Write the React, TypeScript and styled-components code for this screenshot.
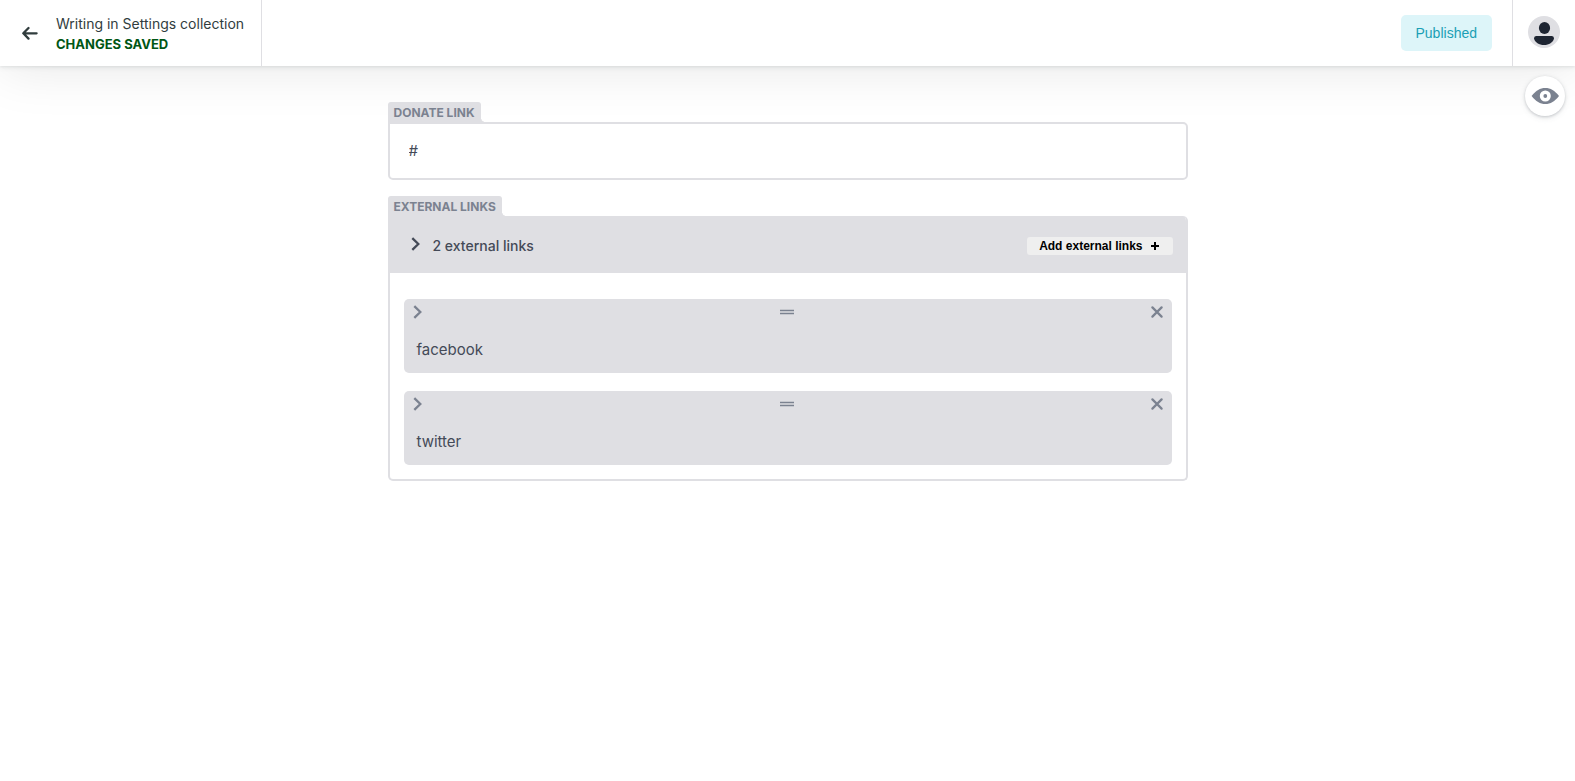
import React, { useState } from 'react';
import styled, { createGlobalStyle } from 'styled-components';

const colors = {
  line: '#dfdfe3',
  label: '#7b8290',
  text: '#444a57',
  dark: '#313d3e',
  saved: '#005614',
};

const GlobalStyle = createGlobalStyle`
  *, *::before, *::after { box-sizing: border-box; }
  body {
    margin: 0;
    background: #fff;
    color: ${colors.text};
    font-family: Inter, 'Liberation Sans', sans-serif;
    font-size: 14px;
  }
  button { font-family: inherit; border: 0; padding: 0; background: none; cursor: pointer; }
  h1, p, ul { margin: 0; padding: 0; }
`;

const Toolbar = styled.header`
  display: flex;
  height: 66px;
  background: #fff;
  box-shadow: 0 2px 6px 0 rgba(68, 74, 87, 0.05), 0 1px 3px 0 rgba(68, 74, 87, 0.1),
    0 2px 54px rgba(0, 0, 0, 0.1);
`;

const BackLink = styled.a`
  display: flex;
  align-items: center;
  gap: 18px;
  padding: 0 17px 0 22px;
  border-right: 1px solid ${colors.line};
  color: ${colors.dark};
  text-decoration: none;
`;

const Status = styled.div`
  padding-top: 2px;
`;

const CollectionName = styled.p`
  font-size: 14px;
  line-height: 20px;
`;

const SaveState = styled.p`
  color: ${colors.saved};
  font-size: 13px;
  font-weight: 700;
  line-height: 20px;
`;

const Actions = styled.div`
  display: flex;
  flex: 1;
  align-items: center;
  justify-content: flex-end;
  padding-right: 20px;
`;

const StatusButton = styled.button`
  height: 36px;
  padding: 0 15px;
  border-radius: 5px;
  background: #ddf5f9;
  color: #1b9fb5;
  font-family: 'Liberation Sans', sans-serif;
  font-size: 14px;
`;

const Account = styled.div`
  display: flex;
  padding: 16px 15px 0;
  border-left: 1px solid ${colors.line};
`;

const AvatarButton = styled.button`
  display: flex;
  width: 32px;
  height: 32px;
`;

const PreviewToggle = styled.button`
  position: absolute;
  top: 76px;
  right: 10px;
  display: flex;
  align-items: center;
  justify-content: center;
  width: 40px;
  height: 40px;
  border-radius: 50%;
  background: #fff;
  color: ${colors.label};
  box-shadow: 0 2px 6px 0 rgba(68, 74, 87, 0.1), 0 1px 3px 0 rgba(68, 74, 87, 0.25);
`;

const Editor = styled.main`
  position: relative;
  max-width: 800px;
  margin: 0 auto;
  padding: 36px 0;
`;

const Field = styled.section`
  & + & { margin-top: 16px; }
`;

const FieldLabel = styled.label`
  position: relative;
  display: block;
  width: fit-content;
  height: 20px;
  padding: 1px 6px 0;
  border-radius: 3px 3px 0 0;
  background: ${colors.line};
  color: ${colors.label};
  font-size: 12px;
  font-weight: 700;
  line-height: 20px;
  text-transform: uppercase;

  &::after {
    content: '';
    position: absolute;
    right: -3px;
    bottom: 0;
    width: 3px;
    height: 3px;
    background: radial-gradient(circle at 100% 0, transparent 2px, ${colors.line} 3px);
  }
`;

const TextInput = styled.input`
  display: block;
  width: 100%;
  height: 58px;
  padding: 0 19px 2px;
  border: 2px solid ${colors.line};
  border-radius: 0 5px 5px 5px;
  outline: 0;
  background: #fff;
  color: ${colors.text};
  font-family: inherit;
  font-size: 15px;
`;

const ListPanel = styled.div`
  border: 2px solid ${colors.line};
  border-top: 0;
  border-radius: 0 5px 5px 5px;
  overflow: hidden;
`;

const ListHeader = styled.div`
  display: flex;
  align-items: center;
  justify-content: space-between;
  height: 57px;
  padding: 2px 13px 0 21px;
  background: ${colors.line};
`;

const ListToggle = styled.button`
  display: flex;
  align-items: center;
  gap: 12px;
  color: ${colors.text};
  font-size: 14px;
  font-weight: 500;
  line-height: 20px;

  svg { margin-bottom: 3px; }
`;

const AddButton = styled.button`
  display: flex;
  align-items: center;
  gap: 8px;
  height: 18px;
  padding: 0 13px 0 12px;
  border-radius: 3px;
  background: #efefef;
  color: #000;
  font-family: 'Liberation Sans', sans-serif;
  font-size: 12px;
  font-weight: 700;
`;

const Items = styled.ul`
  display: flex;
  flex-direction: column;
  gap: 18px;
  padding: 26px 14px 14px;
  list-style: none;
`;

const Item = styled.li`
  height: 74px;
  border-radius: 5px;
  background: ${colors.line};
`;

const ItemBar = styled.div`
  display: flex;
  align-items: center;
  justify-content: space-between;
  height: 26px;
  padding: 0 9px;
  color: ${colors.label};
`;

const IconButton = styled.button`
  display: flex;
  color: inherit;
`;

const ItemTitle = styled.p`
  padding: 15px 13px 0;
  font-size: 15px;
  line-height: 20px;
`;

const Chevron = () => (
  <svg width="10" height="14" viewBox="0 0 10 14" fill="none" stroke="currentColor" strokeWidth="2.3" aria-hidden="true">
    <path d="M1.3 1.200 7.300 7 1.300 12.800" />
  </svg>
);

const BackArrow = () => (
  <svg width="16" height="14" viewBox="0 0 16 14" fill="none" stroke="currentColor" strokeWidth="2.3" strokeLinecap="round" strokeLinejoin="round" aria-hidden="true">
    <path d="M6.500 2 1.300 7.300 6.500 12.600M2 7.300H14.600" />
  </svg>
);

const Plus = () => (
  <svg width="9" height="8" viewBox="0 0 9 8" stroke="currentColor" strokeWidth="2" aria-hidden="true">
    <path d="M4 0V8M0 4H8" />
  </svg>
);

const Cross = () => (
  <svg width="12" height="12" viewBox="0 0 12 12" stroke="currentColor" strokeWidth="2.2" strokeLinecap="round" aria-hidden="true">
    <path d="M1.4 1.4 10.6 10.6M10.6 1.4 1.4 10.6" />
  </svg>
);

const DragHandle = () => (
  <svg width="14" height="6" viewBox="0 0 14 6" stroke="currentColor" strokeWidth="1.6" aria-hidden="true">
    <path d="M0 1.5H14M0 4.5H14" />
  </svg>
);

const Eye = () => (
  <svg width="28" height="16" viewBox="0 0 28 16" aria-hidden="true">
    <path d="M.6 8C5 2.400 9 0 14.300 0S23.600 2.400 28 8C23.600 13.600 19.600 16 14.300 16S5 13.600 .6 8Z" fill="currentColor" />
    <circle cx="14.300" cy="8" r="3.700" fill="none" stroke="#fff" strokeWidth="3.600" />
  </svg>
);

const Avatar = () => (
  <svg width="32" height="32" viewBox="0 0 32 32" aria-hidden="true">
    <circle cx="16" cy="16" r="16" fill={colors.line} />
    <ellipse cx="16.500" cy="12" rx="5.600" ry="6" fill="#1e2532" />
    <path d="M8 20H24Q26 20 26 22.500C25 26.500 21 29 16 29S7 26.500 6 22.500Q6 20 8 20Z" fill="#1e2532" />
  </svg>
);

export default function App() {
  const [donate, setDonate] = useState('#');
  const links = ['facebook', 'twitter'];

  return (
    <>
      <GlobalStyle />
      <Toolbar>
        <BackLink href="#settings">
          <BackArrow />
          <Status>
            <CollectionName>Writing in Settings collection</CollectionName>
            <SaveState>CHANGES SAVED</SaveState>
          </Status>
        </BackLink>
        <Actions>
          <StatusButton type="button">Published</StatusButton>
        </Actions>
        <Account>
          <AvatarButton type="button" aria-label="Account">
            <Avatar />
          </AvatarButton>
        </Account>
      </Toolbar>
      <Editor>
        <Field>
          <FieldLabel htmlFor="donate">Donate link</FieldLabel>
          <TextInput id="donate" value={donate} onChange={(e) => setDonate(e.target.value)} />
        </Field>
        <Field>
          <FieldLabel htmlFor="links-toggle">External links</FieldLabel>
          <ListPanel>
            <ListHeader>
              <ListToggle type="button" id="links-toggle">
                <Chevron />
                <span>2 external links</span>
              </ListToggle>
              <AddButton type="button">
                <span>Add external links</span>
                <Plus />
              </AddButton>
            </ListHeader>
            <Items>
              {links.map((name) => (
                <Item key={name}>
                  <ItemBar>
                    <IconButton type="button" aria-label={`Expand ${name}`}>
                      <Chevron />
                    </IconButton>
                    <DragHandle />
                    <IconButton type="button" aria-label={`Remove ${name}`}>
                      <Cross />
                    </IconButton>
                  </ItemBar>
                  <ItemTitle>{name}</ItemTitle>
                </Item>
              ))}
            </Items>
          </ListPanel>
        </Field>
      </Editor>
      <PreviewToggle type="button" aria-label="Toggle preview">
        <Eye />
      </PreviewToggle>
    </>
  );
}
